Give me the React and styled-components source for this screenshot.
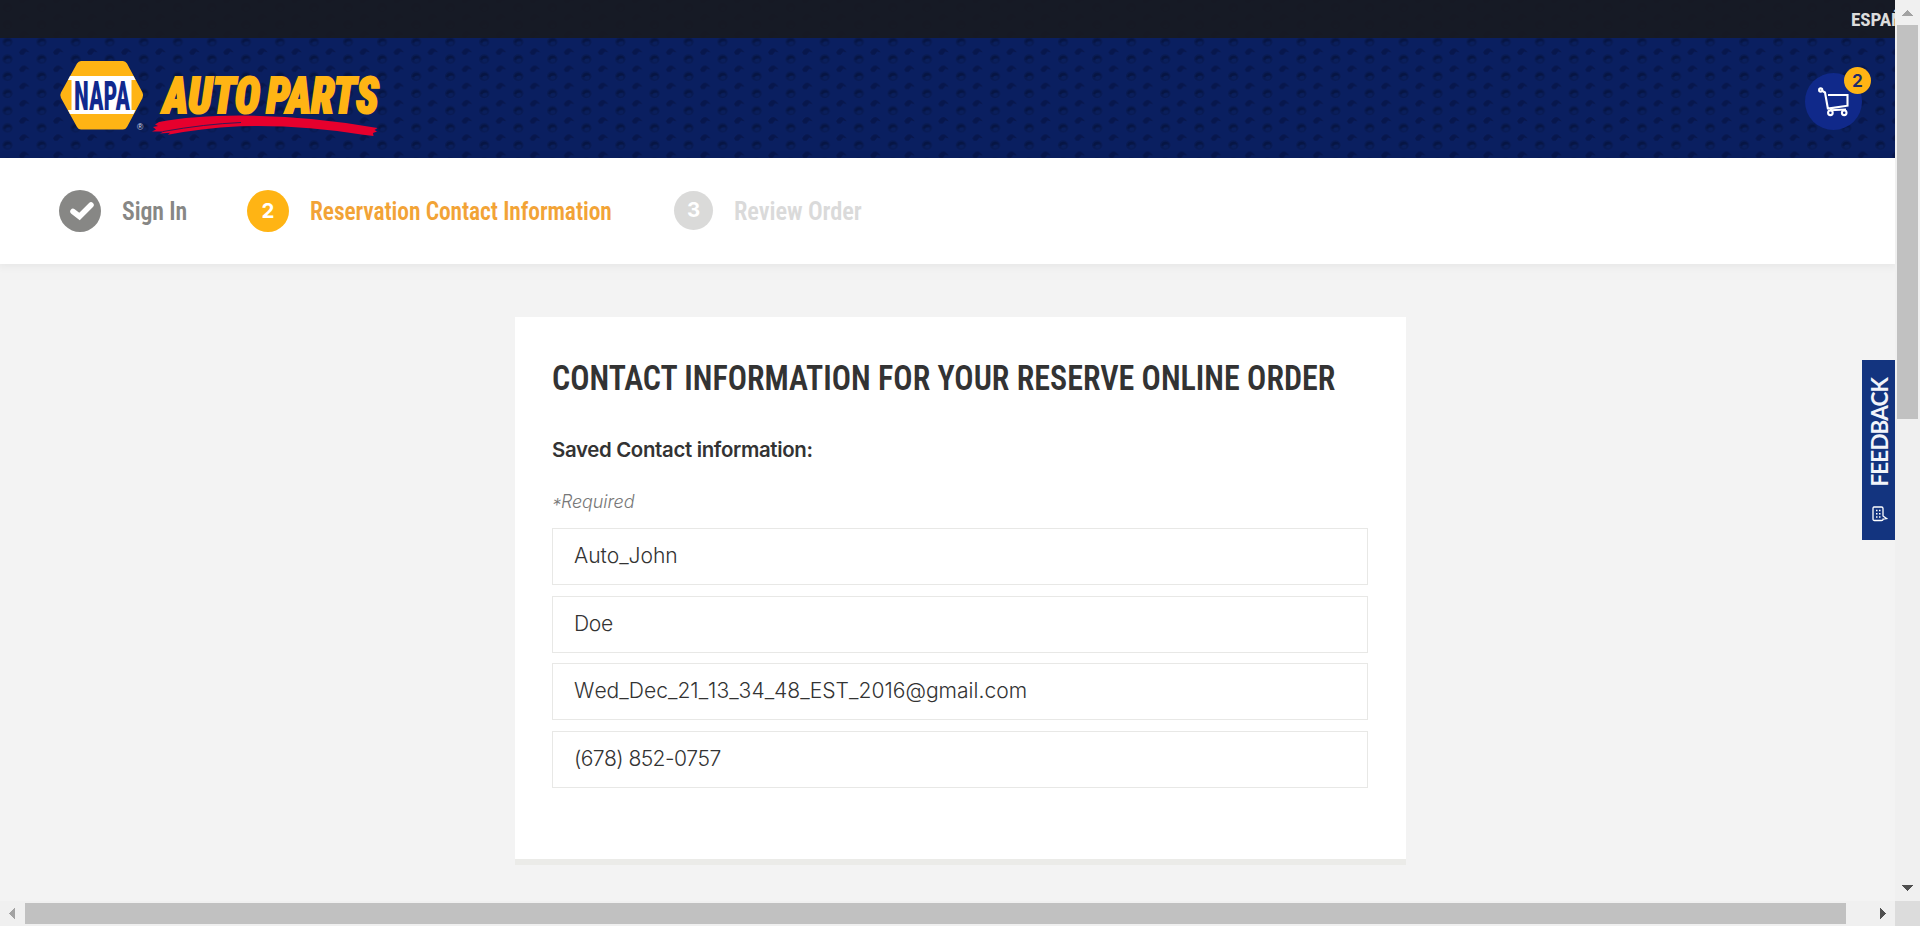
import React from 'react';
import styled, { createGlobalStyle } from 'styled-components';

const GlobalStyle = createGlobalStyle`
  * { box-sizing: border-box; }
  body { margin: 0; overflow: hidden; font-family: Inter, "Liberation Sans", sans-serif; color: #333; }
`;

const Window = styled.div`
  display: grid;
  grid-template-columns: 1fr 25px;
  grid-template-rows: 1fr 25px;
  width: 1920px;
  height: 926px;
`;

const Viewport = styled.div`
  position: relative;
  overflow: hidden;
  background: #f3f3f3;
`;

const Masthead = styled.div`
  position: relative;
  height: 158px;
  background: #0a1f60;
`;

const Texture = styled.svg`
  position: absolute;
  inset: 0;
  width: 100%;
  height: 100%;
`;

const TopBar = styled.div`
  position: relative;
  display: flex;
  height: 38px;
  padding-left: 1851px;
  background: rgba(23, 26, 35, 0.97);
  overflow: hidden;
`;

const Language = styled.span`
  font: 700 19.2px/39px Roboto, sans-serif;
  font-stretch: 75%;
  letter-spacing: -0.1px;
  color: #dcdcdc;
  white-space: nowrap;
`;

const Header = styled.header`
  position: relative;
  display: flex;
  justify-content: space-between;
  align-items: center;
  height: 120px;
  padding: 0 33px 0 56px;
`;

const Logo = styled.svg`
  display: block;
  width: 330px;
  height: 84px;
  overflow: visible;
`;

const NapaText = styled.text`
  font: 800 41px Roboto, sans-serif;
  font-stretch: 75%;
  fill: #10298e;
`;

const BrandText = styled.text`
  font: italic 900 50px Roboto, sans-serif;
  font-stretch: 75%;
  fill: #ffb414;
  stroke: #ffb414;
  stroke-width: 2.2px;
`;

const Registered = styled.text`
  font: 8.5px "Liberation Sans", sans-serif;
  fill: #d7dbe8;
`;

const Cart = styled.div`
  position: relative;
  top: 3.5px;
  width: 57px;
  height: 57px;
  border-radius: 50%;
  background: #10298a;
`;

const CartIcon = styled.svg`
  display: block;
  width: 57px;
  height: 57px;
`;

const Badge = styled.span`
  position: absolute;
  left: 39px;
  top: -6px;
  width: 27px;
  height: 27px;
  border-radius: 50%;
  background: #ffb414;
  color: #1b2a6b;
  font: 600 17.5px/27px Inter, sans-serif;
  text-align: center;
`;

const Steps = styled.nav`
  position: relative;
  display: flex;
  height: 106px;
  padding: 32px 0 0 59px;
  background: #fff;
  box-shadow: 0 1px 8px 2px rgba(0, 0, 0, 0.05);
`;

const Step = styled.div`
  display: flex;
  width: ${(p) => p.$width}px;
  color: ${(p) => p.$color};
`;

const StepMark = styled.span`
  display: flex;
  justify-content: center;
  align-items: center;
  width: ${(p) => p.$size}px;
  height: ${(p) => p.$size}px;
  margin: ${(p) => (42 - p.$size) / 2 - (p.$size < 42 ? 0.5 : 0)}px 21px 0 0;
  border-radius: 50%;
  background: ${(p) => p.$fill};
  color: #fff;
  font: 700 20.5px/1 Inter, sans-serif;
`;

const StepLabel = styled.span`
  font: 600 25.6px/42px Roboto, sans-serif;
  font-stretch: 75%;
  letter-spacing: -0.1px;
  white-space: nowrap;
  transform: scaleX(${(p) => p.$squeeze});
  transform-origin: left;
`;

const Card = styled.main`
  width: 891px;
  height: 548px;
  margin: 53px 0 0 515px;
  padding: 38px 38px 0 37px;
  background: #fff;
  border-bottom: 6px solid #ebebe8;
`;

const Title = styled.h1`
  margin: 0;
  font: 600 35px/48px Roboto, sans-serif;
  font-stretch: 75%;
  color: #333;
  white-space: nowrap;
  transform: scaleX(0.914);
  transform-origin: left;
`;

const Subtitle = styled.h2`
  margin: 34px 0 0;
  font: 600 20.4px/26px Inter, sans-serif;
  letter-spacing: -0.33px;
  color: #333;
`;

const Required = styled.p`
  margin: 27px 0 14.3px;
  font: italic 300 18px/24px Inter, sans-serif;
  letter-spacing: -0.1px;
  color: #777;
`;

const Asterisk = styled.span`
  position: relative;
  top: 4px;
`;

const Fields = styled.div`
  display: grid;
  gap: 10.5px;
`;

const Field = styled.input`
  width: 816px;
  height: 57px;
  padding: 0 21px 2px;
  border: 1px solid #e8e8e6;
  border-radius: 0;
  background: #fff;
  color: #333;
  font: 300 21.1px Inter, sans-serif;
  font-kerning: none;
  letter-spacing: ${(p) => p.$tracking}px;
`;

const Feedback = styled.div`
  position: absolute;
  right: 0;
  top: 360px;
  display: flex;
  flex-direction: column;
  align-items: center;
  justify-content: space-between;
  width: 33px;
  height: 180px;
  padding: 18px 0 18px 2px;
  background: #13347f;
`;

const FeedbackLabel = styled.span`
  writing-mode: vertical-rl;
  transform: rotate(180deg);
  font: 700 22.5px/30px Lato, sans-serif;
  letter-spacing: -0.9px;
  color: #f2f4fa;
`;

const FeedbackIcon = styled.svg`
  width: 16px;
  height: 16px;
`;

const VerticalBar = styled.div`
  display: flex;
  flex-direction: column;
  justify-content: space-between;
  background: #f0f0f0;
`;

const HorizontalBar = styled.div`
  display: flex;
  justify-content: space-between;
  background: #f0f0f0;
`;

const ArrowBox = styled.svg`
  flex: none;
  width: 25px;
  height: 25px;
  shape-rendering: crispEdges;
`;

const VerticalThumb = styled.div`
  width: 21px;
  height: 394px;
  margin: 0 0 auto 2px;
  background: #c1c1c1;
`;

const HorizontalThumb = styled.div`
  width: 1821px;
  height: 21px;
  margin: 2px auto 0 0;
  background: #c1c1c1;
`;

const Corner = styled.div`
  background: #dcdcdc;
`;

const FIELDS = [
  { value: 'Auto_John', tracking: -0.05 },
  { value: 'Doe', tracking: -0.3 },
  { value: 'Wed_Dec_21_13_34_48_EST_2016@gmail.com', tracking: 0 },
  { value: '(678) 852-0757', tracking: -0.6 },
];

function Dimples() {
  return (
    <Texture>
      <defs>
        <pattern id="dimples" width="34.05" height="17.2" patternUnits="userSpaceOnUse" x="-1.5" y="33">
          <ellipse cx="9" cy="8.8" rx="5.2" ry="4.7" fill="#07184d" opacity=".7" />
          <path d="M5 9.5Q5.500 5.500 9 5.500T13 8.500Q10 7 8.500 10Z" fill="#061039" opacity=".55" />
          <ellipse cx="9.500" cy="10.300" rx="2.400" ry="2" fill="#0a1f5c" />
          <path d="M20.500 2.500A5 5 0 0 1 22 0H29A5.500 5.500 0 0 1 31 2.500L27.500 1.500 25 4.500H22Z M22 17.200Q25.500 13.500 29 17.200Z" fill="#061242" opacity=".65" />
        </pattern>
      </defs>
      <rect width="100%" height="100%" fill="url(#dimples)" />
    </Texture>
  );
}

function BrandLogo() {
  return (
    <Logo viewBox="56 56 330 84">
      <path d="M81 61H123Q125.500 61 127 63.500L142.500 92.500Q143.800 95 142.500 98L127 127Q125.500 129.500 123 129.500H81Q78.500 129.500 77 127L61 98Q59.500 95 61 92.500L77 63.500Q78.500 61 81 61Z" fill="#ffb414" />
      <path d="M70 76H133.500L135.500 80H131.500V110H135.500L133.500 114H70L68 110H71.500V80H68Z" fill="#fff" />
      <NapaText x="74" y="110" textLength="56" lengthAdjust="spacingAndGlyphs">NAPA</NapaText>
      <Registered x="137" y="129.500">®</Registered>
      <BrandText x="163" y="112.500" textLength="97" lengthAdjust="spacingAndGlyphs">AUTO</BrandText>
      <BrandText x="266.500" y="112.500" textLength="112" lengthAdjust="spacingAndGlyphs">PARTS</BrandText>
      <path d="M159 122Q192 115.500 240 115.500 310 115.500 377.500 128L374.500 130 377 131.500 373 133 373.500 136 363 134.800Q300 124.500 240 126.300 200 128.500 168 134.800L170 132.800 160 133.500 164 131.500 152 131.500 156 129.500 153 127 158 126 155 124.500Z" fill="#e6002d" />
      <path d="M163 131.500Q205 124 241 122.500" fill="none" stroke="#0a1f60" strokeWidth=".8" />
    </Logo>
  );
}

function CartButton() {
  return (
    <Cart>
      <CartIcon viewBox="1805 73 57 57" fill="none" stroke="#fff" strokeWidth="2.100">
        <circle cx="1820.700" cy="90" r="1.600" />
        <path d="M1822.300 90.800L1825 92.500 1828 109.300M1828 95H1847.500V105.700L1827.800 108.600M1830 110.200L1846 109.500" />
        <circle cx="1830.400" cy="112.800" r="2.300" />
        <circle cx="1844.200" cy="112.800" r="2.300" />
      </CartIcon>
      <Badge>2</Badge>
    </Cart>
  );
}

export default function App() {
  return (
    <>
      <GlobalStyle />
      <Window>
        <Viewport>
          <Masthead>
            <Dimples />
            <TopBar><Language>ESPAÑOL</Language></TopBar>
            <Header>
              <BrandLogo />
              <CartButton />
            </Header>
          </Masthead>
          <Steps>
            <Step $width={188} $color="#878785">
              <StepMark $size={42} $fill="#878785">
                <svg width="42" height="42" viewBox="0 0 42 42">
                  <path d="M14 21.500L20.500 26.500 32 15" fill="none" stroke="#fff" strokeWidth="5.500" strokeLinecap="round" />
                </svg>
              </StepMark>
              <StepLabel $squeeze={0.93}>Sign In</StepLabel>
            </Step>
            <Step $width={427} $color="#f2a336">
              <StepMark $size={42} $fill="#ffb414">2</StepMark>
              <StepLabel $squeeze={0.918}>Reservation Contact Information</StepLabel>
            </Step>
            <Step $width={200} $color="#dadada">
              <StepMark $size={39} $fill="#dadad9">3</StepMark>
              <StepLabel $squeeze={0.955}>Review Order</StepLabel>
            </Step>
          </Steps>
          <Card>
            <Title>CONTACT INFORMATION FOR YOUR RESERVE ONLINE ORDER</Title>
            <Subtitle>Saved Contact information:</Subtitle>
            <Required><Asterisk>*</Asterisk>Required</Required>
            <Fields>
              {FIELDS.map((f) => <Field key={f.value} defaultValue={f.value} $tracking={f.tracking} />)}
            </Fields>
          </Card>
          <Feedback>
            <FeedbackLabel>FEEDBACK</FeedbackLabel>
            <FeedbackIcon viewBox="0 0 16 16">
              <path d="M2 1H9.500Q11 1 11 2.500V10L14.500 12.500 11 13V13.500Q11 14.500 9.500 14.500H2.500Q1 14.500 1 13V2.500Q1 1 2 1Z" fill="none" stroke="#fff" strokeWidth="1.300" />
              <path d="M4 4.500H5.500M7 4.500H8.500M4 7.700H5.500M7 7.700H8.500M4 11H5.500M7 11H8.500" stroke="#fff" strokeWidth="1.500" />
            </FeedbackIcon>
          </Feedback>
        </Viewport>
        <VerticalBar>
          <ArrowBox><path d="M7 16L12.500 10 18 16Z" fill="#a3a3a3" /></ArrowBox>
          <VerticalThumb />
          <ArrowBox><path d="M7 9H18L12.500 15Z" fill="#505050" /></ArrowBox>
        </VerticalBar>
        <HorizontalBar>
          <ArrowBox><path d="M15 7V18L9 12.500Z" fill="#a3a3a3" /></ArrowBox>
          <HorizontalThumb />
          <ArrowBox><path d="M10 7V18L16 12.500Z" fill="#505050" /></ArrowBox>
        </HorizontalBar>
        <Corner />
      </Window>
    </>
  );
}
